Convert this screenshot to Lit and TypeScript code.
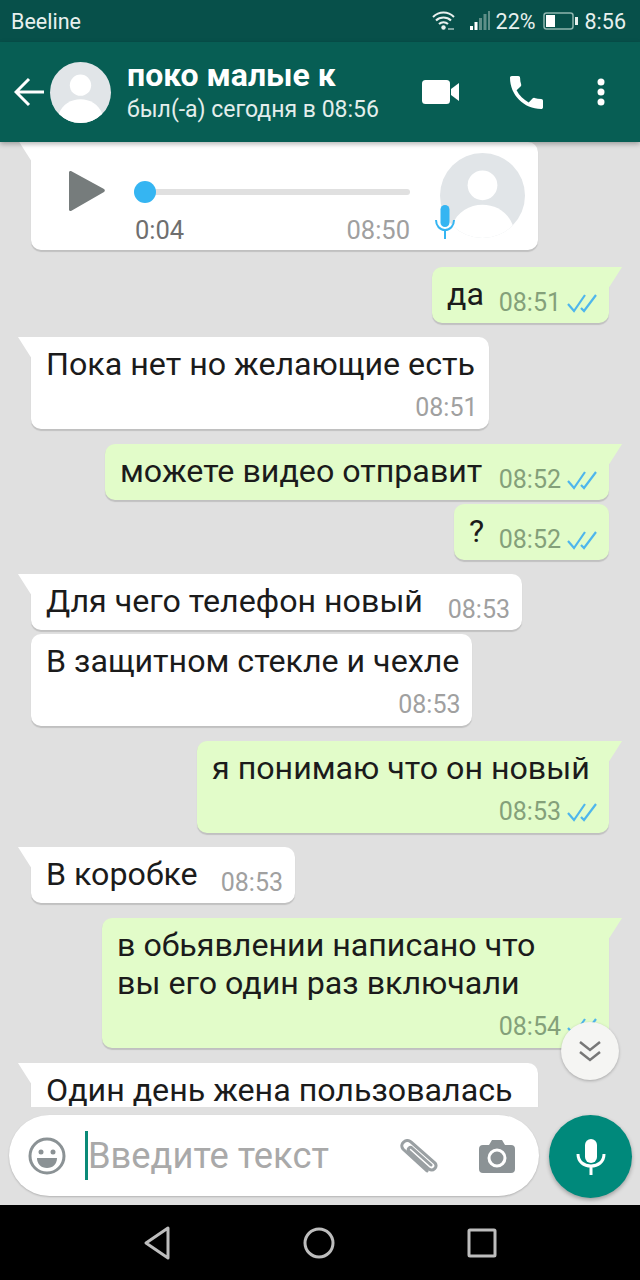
import { LitElement, html, css, svg } from "lit";
import { customElement } from "lit/decorators.js";

type Msg = { out: boolean; lines: string[]; time: string; stack?: boolean; gap: number; w: number; tail?: boolean };

const msgs: Msg[] = [
  { out: true, lines: ["да"], time: "08:51", gap: 17, w: 177, tail: true },
  { out: false, lines: ["Пока нет но желающие есть"], time: "08:51", stack: true, gap: 14, w: 458, tail: true },
  { out: true, lines: ["можете видео отправит"], time: "08:52", gap: 15, w: 504, tail: true },
  { out: true, lines: ["?"], time: "08:52", gap: 4, w: 155 },
  { out: false, lines: ["Для чего телефон новый"], time: "08:53", gap: 14, w: 491, tail: true },
  { out: false, lines: ["В защитном стекле и чехле"], time: "08:53", stack: true, gap: 4, w: 441 },
  { out: true, lines: ["я понимаю что он новый"], time: "08:53", stack: true, gap: 15, w: 412, tail: true },
  { out: false, lines: ["В коробке"], time: "08:53", gap: 14, w: 264, tail: true },
  { out: true, lines: ["в обьявлении написано что", "вы его один раз включали"], time: "08:54", stack: true, gap: 15, w: 507, tail: true },
];

const checks = svg`<path d="M1 11l6 7L18 2M14 15l3 3L29 2" fill="none" stroke="#4fb6ec" stroke-width="2.200"/>`;

const person = svg`<circle cx="50" cy="38" r="17.5" fill="#fff"/><path d="M14 86c6-17 21-25 36-25s30 8 36 25a50 50 0 0 1-72 0z" fill="#fff"/>`;

@customElement("app-root")
export class AppRoot extends LitElement {
  static styles = css`
    :host { display: block; width: 640px; height: 1280px; font-family: Roboto, "Noto Sans", sans-serif; background: #e0e0e0; overflow: hidden; }
    .page { display: flex; flex-direction: column; height: 1280px; position: relative; }
    .status { height: 42px; flex: none; background: #07504a; color: #e8f0ee; display: flex; align-items: center; padding: 0 14px 0 11px; font-size: 21.5px; }
    .carrier { flex: 1; }
    .status svg { display: block; }
    .wifi { margin-right: 15px; }
    .signal { margin-right: 6px; }
    .batt { margin: 0 7px; }
    .head { height: 100px; flex: none; background: #075e54; color: #fff; display: flex; align-items: center; padding: 0 0 0 14px; box-shadow: 0 2px 5px rgba(0,0,0,.3); position: relative; z-index: 2; }
    .avatar { border-radius: 50%; background: #e1e5e8; display: block; flex: none; }
    .head .avatar { margin: 0 16px 0 6px; }
    .who { width: 295px; display: flex; flex-direction: column; gap: 3px; }
    .name { font-size: 32px; font-weight: 700; line-height: 34px; margin-top: -1px; white-space: nowrap; }
    .sub { font-size: 23px; line-height: 30px; color: #e3eeec; white-space: nowrap; }
    .call { margin-left: 51px; display: block; }
    .more { margin-left: 54px; }
    .chat { flex: none; height: 965px; overflow: hidden; display: flex; flex-direction: column; align-items: flex-start; }
    .bubble { position: relative; box-sizing: border-box; background: #fff; border-radius: 10px; margin-left: 31px; box-shadow: 0 1.5px 1px rgba(0,0,0,.14); color: #1b1b1b; font-size: 32.2px; flex: none; }
    .bubble.out { background: #e2fcc9; margin-left: 0; align-self: flex-end; margin-right: 31px; }
    .bubble.tailed { border-top-left-radius: 0; }
    .bubble.out.tailed { border-top-left-radius: 10px; border-top-right-radius: 0; }
    .tail { position: absolute; top: 0; width: 14px; height: 22px; background: #fff; }
    .tail.l { left: -13px; clip-path: polygon(0 0, 100% 0, 100% 100%); }
    .out .tail.r { right: -13px; left: auto; background: #e2fcc9; clip-path: polygon(0 0, 100% 0, 0 100%); }
    .row { display: flex; align-items: flex-start; justify-content: space-between; padding: 8px 12px 0 15px; height: 56px; box-sizing: border-box; white-space: nowrap; line-height: 38px; }
    .stack { padding: 8px 11.5px 0 15px; white-space: nowrap; line-height: 38px; }
    .meta { display: flex; align-items: center; gap: 6px; font-size: 25px; line-height: 30px; color: #a0a0a0; }
    .out .meta { color: #84a07a; }
    .row .meta { margin-top: 13px; }
    .stack .meta { justify-content: flex-end; margin-top: 10px; padding-bottom: 6px; }
    .out .stack { padding-right: 12px; }
    .audio { width: 507px; height: 108px; display: flex; }
    .audio .tail { top: -2px; }
    .play { margin: 29px 0 0 38px; flex: none; }
    .track-col { margin-left: 30px; width: 276px; flex: none; }
    .track { height: 6px; background: #e0e0e0; border-radius: 3px; margin: 47px 1px 0 10px; position: relative; }
    .knob { position: absolute; left: -11px; top: -8px; width: 22px; height: 22px; border-radius: 50%; background: #35b5f2; }
    .times { display: flex; justify-content: space-between; font-size: 25.5px; line-height: 30px; margin-top: 20px; padding-right: 1px; color: #6f6f6f; }
    .times span:last-child { color: #a0a0a0; }
    .audio-av { position: relative; margin: 11px 0 0 29px; flex: none; width: 85px; height: 85px; }
    .mic-badge { position: absolute; left: -6px; top: 52px; }
    .down { position: absolute; left: 561px; top: 1022px; width: 58px; height: 58px; border-radius: 50%; background: #f5f5f3; box-shadow: 0 1px 3px rgba(0,0,0,.25); display: flex; align-items: center; justify-content: center; z-index: 3; }
    .composer { flex: none; height: 98px; display: flex; align-items: flex-start; padding: 8px 8px 0 9px; box-sizing: border-box; gap: 10px; }
    .pill { width: 530px; height: 81px; background: #fff; border-radius: 41px; box-shadow: 0 1px 2px rgba(0,0,0,.2); display: flex; align-items: center; flex: none; padding-left: 19px; box-sizing: border-box; }
    .caret { width: 3px; height: 49px; background: #0a8a78; margin-left: 19px; flex: none; }
    .ph { font-size: 36.3px; color: #a9a9a9; width: 312px; flex: none; white-space: nowrap; line-height: 40px; }
    .cam { margin-left: 41px; }
    .fab { width: 83px; height: 83px; border-radius: 50%; background: #00897b; box-shadow: 0 2px 4px rgba(0,0,0,.3); display: flex; align-items: center; justify-content: center; flex: none; }
    .nav { flex: none; height: 75px; background: #000; display: flex; align-items: center; justify-content: center; gap: 132px; }
  `;

  bubble(m: Msg) {
    const meta = html`<div class="meta"><span>${m.time}</span>${m.out ? html`<svg width="30" height="20" viewBox="0 0 30 20">${checks}</svg>` : ""}</div>`;
    return html`<div class="bubble ${m.out ? "out" : ""} ${m.tail ? "tailed" : ""}" style="margin-top:${m.gap}px;width:${m.w}px">
      ${m.tail ? html`<div class="tail ${m.out ? "r" : "l"}"></div>` : ""}
      ${m.stack
        ? html`<div class="stack">${m.lines.map((l) => html`<div>${l}</div>`)}${meta}</div>`
        : html`<div class="row"><div>${m.lines[0]}</div>${meta}</div>`}
    </div>`;
  }

  render() {
    return html`<div class="page">
      <div class="status">
        <div class="carrier">Beeline</div>
        <svg class="wifi" width="23" height="20" viewBox="0 0 23 20" fill="none" stroke="#e8f0ee" stroke-width="2">
          <path d="M1 6c6-6 15-6 21 0M4 9.500c4-4 11-4 15 0M7 13c2.500-2.500 6.500-2.500 9 0"/><circle cx="11.500" cy="16.500" r="2.200" fill="#e8f0ee" stroke="none"/><path d="M16 18h6" stroke-width="1.500" opacity=".7"/>
        </svg>
        <svg class="signal" width="20" height="20" viewBox="0 0 20 20">
          <rect x="0" y="15" width="3" height="4" fill="#fff"/><rect x="4.500" y="11" width="3" height="8" fill="#fff"/>
          <rect x="9" y="7" width="3" height="12" fill="#5f8f88"/><rect x="13.500" y="3" width="3" height="16" fill="#5f8f88"/><rect x="18" y="0" width="2" height="19" fill="#5f8f88"/>
        </svg>
        <span>22%</span>
        <svg class="batt" width="35" height="18" viewBox="0 0 35 18">
          <rect x="1" y="1" width="29" height="16" rx="2.500" fill="none" stroke="#8fb5af" stroke-width="1.500"/><rect x="3" y="3" width="9" height="12" fill="#fff"/><rect x="32" y="5" width="3" height="8" fill="#e8f0ee"/>
        </svg>
        <span>8:56</span>
      </div>
      <div class="head">
        <svg width="30" height="30" viewBox="0 0 30 30" fill="none" stroke="#fff" stroke-width="3"><path d="M30 15H3M15 2L2 15l13 13"/></svg>
        <svg class="avatar" width="61" height="61" viewBox="0 0 100 100">${person}</svg>
        <div class="who"><div class="name">поко малые к</div><div class="sub">был(-а) сегодня в 08:56</div></div>
        <svg width="37" height="24" viewBox="0 0 37 24" fill="#fff"><rect width="28" height="24" rx="3.500"/><path d="M29 9l8-6v18l-8-6z"/></svg>
        <svg class="call" width="33" height="33" viewBox="3 3 18 18" fill="#fff"><path d="M6.600 10.800c1.400 2.800 3.800 5.100 6.600 6.600l2.200-2.200c.3-.3.700-.4 1-.2 1.100.4 2.300.6 3.600.6.600 0 1 .4 1 1V20c0 .6-.4 1-1 1C10.600 21 3 13.400 3 4c0-.6.400-1 1-1h3.500c.6 0 1 .4 1 1 0 1.300.2 2.500.6 3.600.1.300 0 .7-.2 1z"/></svg>
        <svg class="more" width="8" height="28" viewBox="0 0 8 28" fill="#fff"><circle cx="4" cy="4" r="3.500"/><circle cx="4" cy="14" r="3.500"/><circle cx="4" cy="24" r="3.500"/></svg>
      </div>
      <div class="chat">
        <div class="bubble audio tailed">
          <div class="tail l"></div>
          <svg class="play" width="36" height="40" viewBox="0 0 36 40"><path d="M2 0l33 18a2 2 0 0 1 0 3L2 40a1.500 1.500 0 0 1-2-1.500V1.500A1.500 1.500 0 0 1 2 0z" fill="#767c7c"/></svg>
          <div class="track-col">
            <div class="track"><div class="knob"></div></div>
            <div class="times"><span>0:04</span><span>08:50</span></div>
          </div>
          <div class="audio-av">
            <svg class="avatar" width="85" height="85" viewBox="0 0 100 100">${person}</svg>
            <svg class="mic-badge" width="22" height="34" viewBox="0 0 22 34"><rect x="6.500" y="0" width="9" height="22" rx="4.500" fill="#35b5f2"/><path d="M2 15c0 6 4 10 9 10s9-4 9-10M11 25v9" fill="none" stroke="#35b5f2" stroke-width="2"/></svg>
          </div>
        </div>
        ${msgs.map((m) => this.bubble(m))}
        <div class="bubble tailed" style="margin-top:15px;width:507px;height:70px">
          <div class="tail l"></div>
          <div class="row"><div>Один день жена пользовалась</div></div>
        </div>
      </div>
      <div class="composer">
        <div class="pill">
          <svg width="38" height="38" viewBox="0 0 38 38" fill="none" stroke="#8b9295" stroke-width="3"><circle cx="19" cy="19" r="17"/><circle cx="13" cy="15" r="2.500" fill="#8b9295" stroke="none"/><circle cx="25" cy="15" r="2.500" fill="#8b9295" stroke="none"/><path d="M9 21h20c0 6-4 10-10 10S9 27 9 21z" fill="#8b9295" stroke="none"/></svg>
          <div class="caret"></div>
          <div class="ph">Введите текст</div>
          <svg width="38" height="34" viewBox="0 0 38 34" fill="none" stroke="#9aa0a3" stroke-width="3" stroke-linecap="round"><path d="M27 32L3 10C-1 5 6-1 11 3l24 21c3 4-2 9-6 6L9 12c-2-2 1-5 3-3l19 17"/></svg>
          <svg class="cam" width="36" height="34" viewBox="0 0 36 34"><path d="M4 6h6l3-5h10l3 5h6a4 4 0 0 1 4 4v20a4 4 0 0 1-4 4H4a4 4 0 0 1-4-4V10a4 4 0 0 1 4-4z" fill="#8b9295"/><circle cx="18" cy="19" r="8" fill="none" stroke="#fff" stroke-width="3"/></svg>
        </div>
        <div class="fab">
          <svg width="30" height="36" viewBox="0 0 30 36"><rect x="9" y="0" width="12" height="24" rx="6" fill="#fff"/><path d="M2 15c0 8 6 12 13 12s13-4 13-12M15 27v9" fill="none" stroke="#fff" stroke-width="3"/></svg>
        </div>
      </div>
      <div class="nav">
        <svg width="28" height="34" viewBox="0 0 28 34" fill="none" stroke="#bdbdbd" stroke-width="3" stroke-linejoin="round"><path d="M25 2v30L3 17z"/></svg>
        <svg width="32" height="32" viewBox="0 0 32 32" fill="none" stroke="#bdbdbd" stroke-width="3"><circle cx="16" cy="16" r="14"/></svg>
        <svg width="30" height="30" viewBox="0 0 30 30" fill="none" stroke="#bdbdbd" stroke-width="3" stroke-linejoin="round"><rect x="2" y="2" width="26" height="26" rx="1"/></svg>
      </div>
      <div class="down"><svg width="24" height="22" viewBox="0 0 24 22" fill="none" stroke="#777" stroke-width="2.500"><path d="M2 2l10 8 10-8M2 12l10 8 10-8"/></svg></div>
    </div>`;
  }
}
